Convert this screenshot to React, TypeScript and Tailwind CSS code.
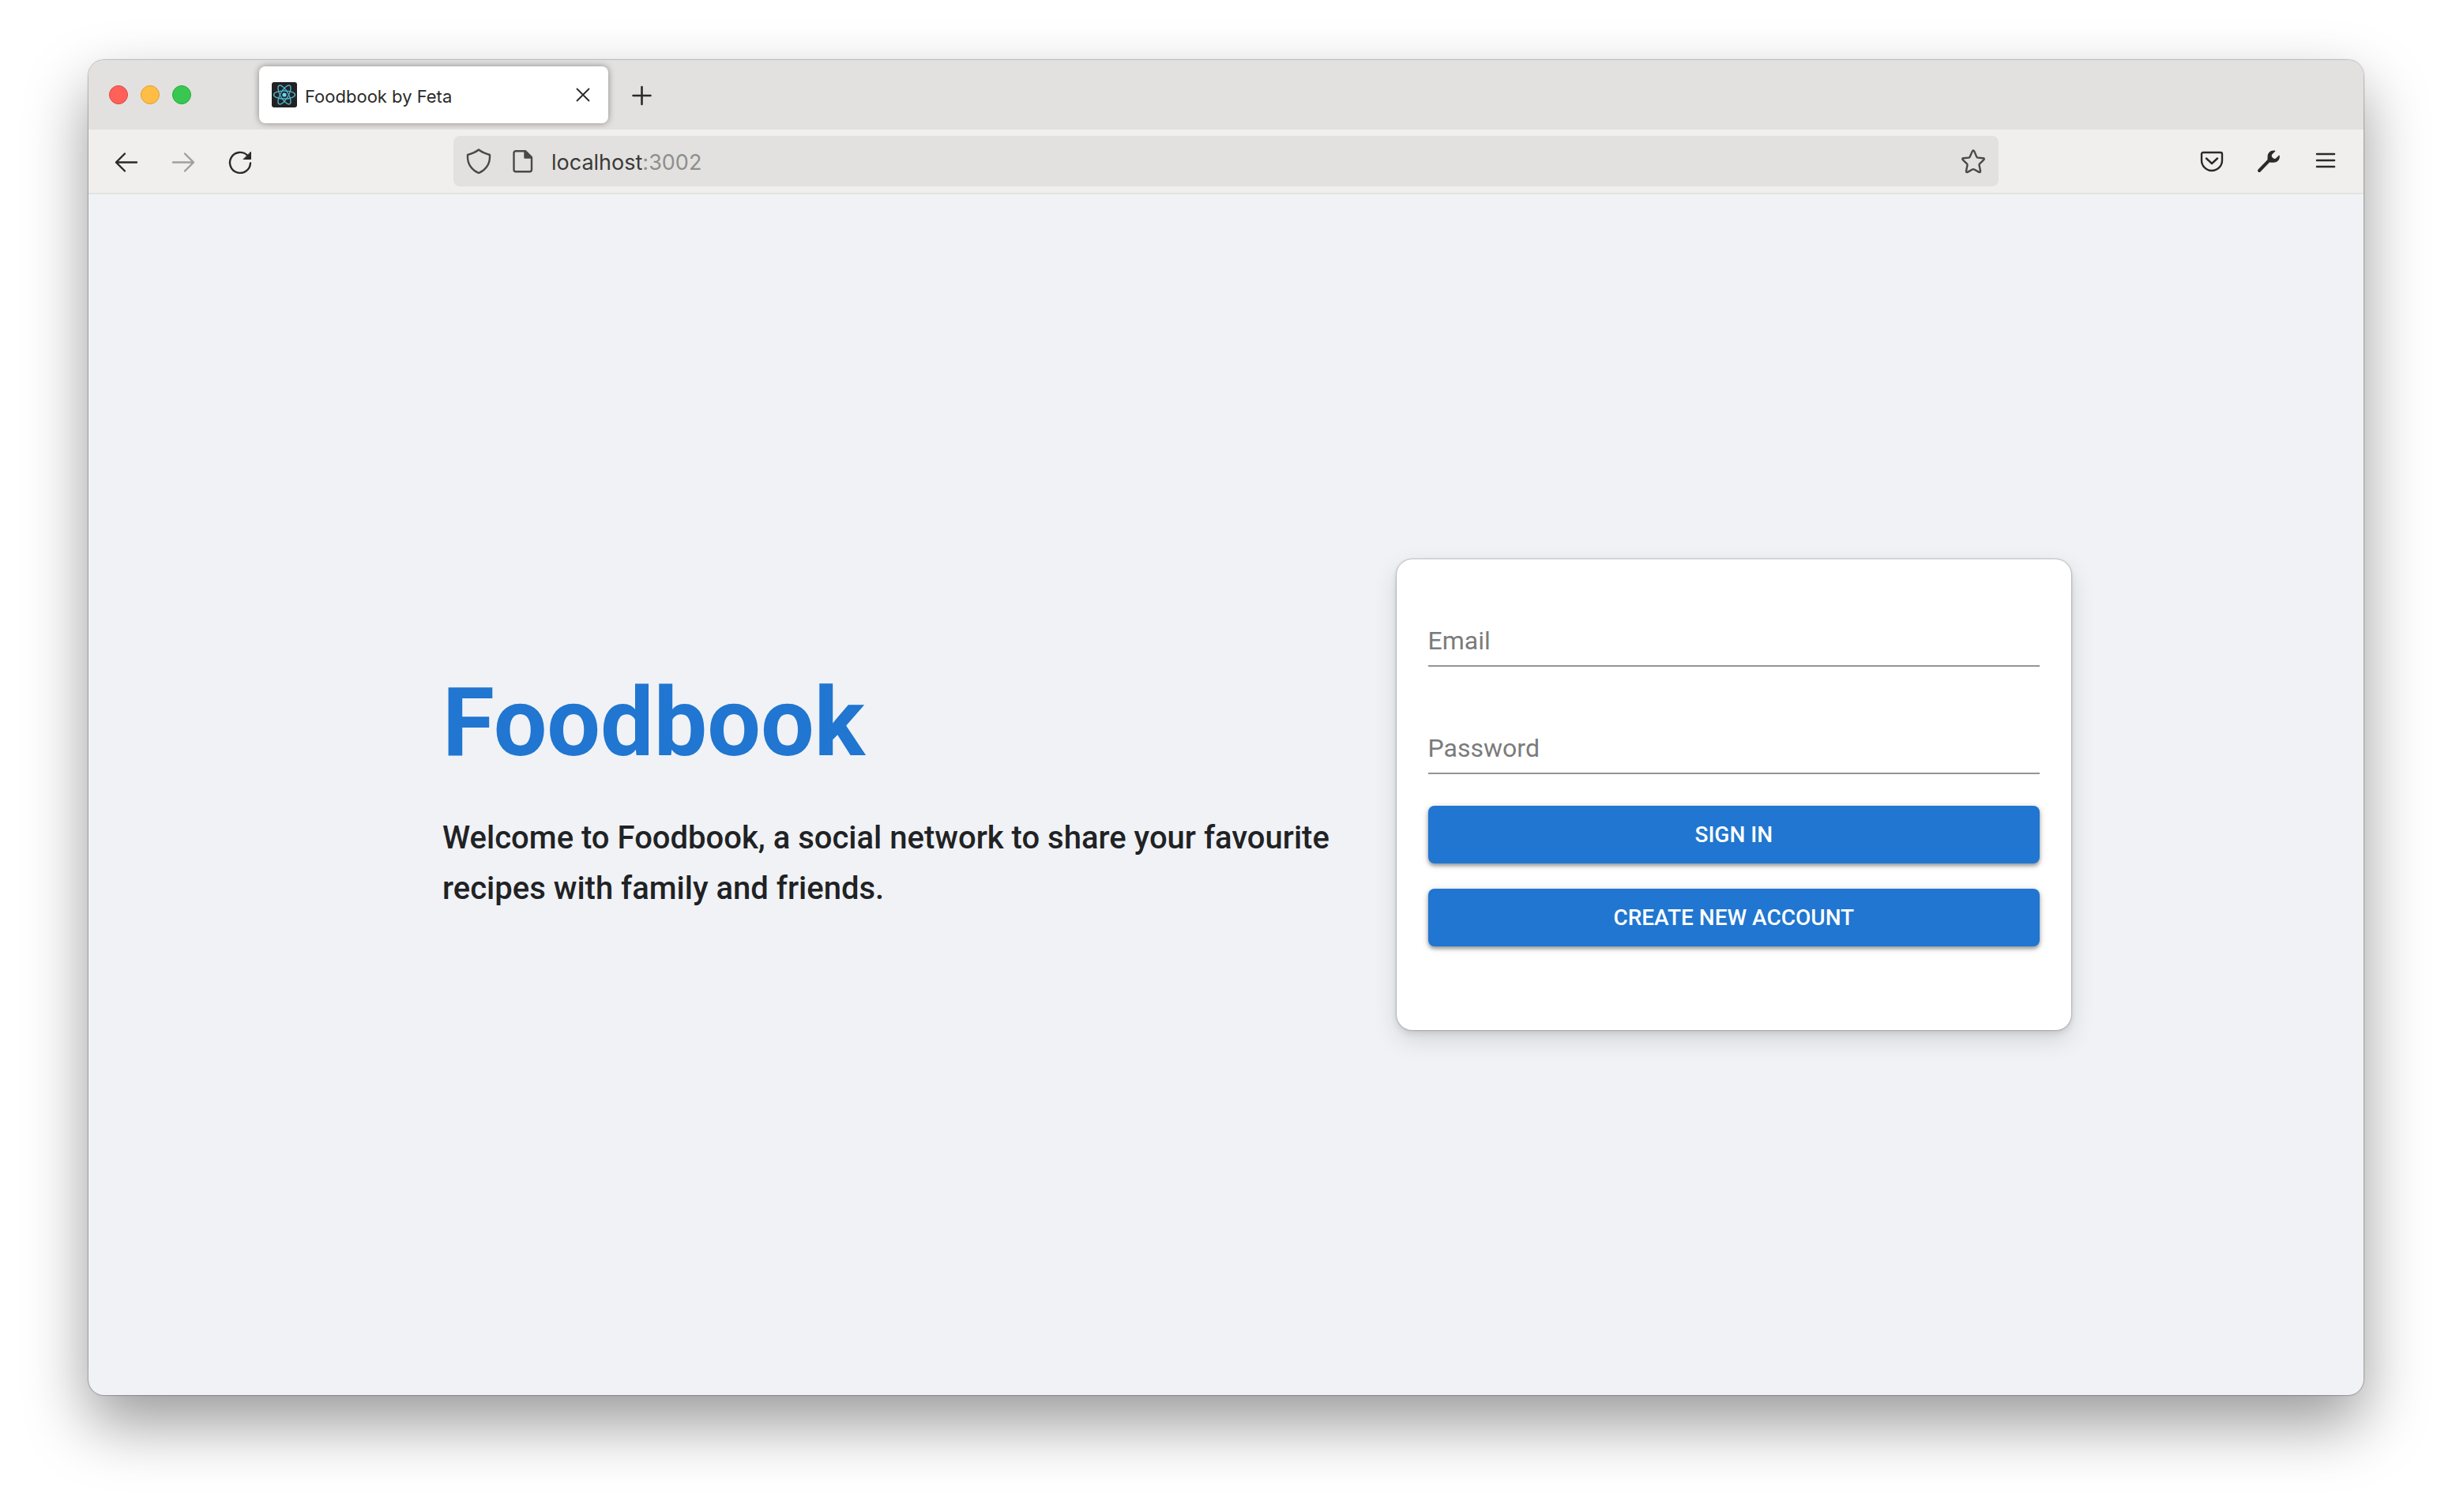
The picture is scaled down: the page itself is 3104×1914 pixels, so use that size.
import type { ReactNode } from "react";

function IconButton({ label, disabled, children }: { label: string; disabled?: boolean; children: ReactNode }) {
  return (
    <button
      type="button"
      aria-label={label}
      disabled={disabled}
      className="flex size-16 items-center justify-center rounded-lg text-[#2b2a28] disabled:opacity-40"
    >
      {children}
    </button>
  );
}

function Icon({ children }: { children: ReactNode }) {
  return (
    <svg
      viewBox="0 0 32 32"
      className="size-8 shrink-0"
      fill="none"
      stroke="currentColor"
      strokeWidth="2.4"
      strokeLinecap="round"
      strokeLinejoin="round"
      aria-hidden="true"
    >
      {children}
    </svg>
  );
}

function ReactFavicon() {
  return (
    <svg viewBox="0 0 32 32" className="size-8 shrink-0" aria-hidden="true">
      <rect width="32" height="32" rx="3" fill="#222222" />
      <g fill="none" stroke="#4fb3cf" strokeWidth="1.4">
        <ellipse cx="16" cy="16" rx="13.5" ry="5" />
        <ellipse cx="16" cy="16" rx="13.5" ry="5" transform="rotate(60 16 16)" />
        <ellipse cx="16" cy="16" rx="13.5" ry="5" transform="rotate(120 16 16)" />
      </g>
      <circle cx="16" cy="16" r="2.6" fill="#61dafb" />
    </svg>
  );
}

function TabStrip() {
  return (
    <header className="flex h-22 items-center bg-[#e2e1df] pl-[26px]">
      <div className="flex w-[190px] gap-4">
        <button type="button" aria-label="Close window" className="size-6 rounded-full border border-[#e2463f] bg-[#ff6159]" />
        <button type="button" aria-label="Minimize window" className="size-6 rounded-full border border-[#dfa033] bg-[#ffbd45]" />
        <button type="button" aria-label="Zoom window" className="size-6 rounded-full border border-[#27ab39] bg-[#38c851]" />
      </div>
      <div className="flex h-18 w-[442px] items-center gap-[10px] rounded-lg bg-white px-4 shadow-[0_0_8px_rgba(0,0,0,0.4)]">
        <ReactFavicon />
        <span className="flex-1 pt-1 font-[Inter] text-[22px] leading-8 text-[#2b2a28]">Foodbook by Feta</span>
        <button type="button" aria-label="Close tab" className="text-[#2b2a28]">
          <Icon>
            <path d="M8.500 8.500l15 15M23.500 8.500l-15 15" strokeWidth="1.800" />
          </Icon>
        </button>
      </div>
      <div className="ml-[10px]">
        <IconButton label="New tab">
          <Icon>
            <path d="M16.500 6v22M5.500 17h22" strokeWidth="2.600" />
          </Icon>
        </IconButton>
      </div>
    </header>
  );
}

function Toolbar() {
  return (
    <nav className="flex h-[82px] items-center border-b-2 border-[#e4e3e1] bg-[#f0efed] px-4" aria-label="Browser toolbar">
      <div className="flex gap-2">
        <IconButton label="Back">
          <Icon>
            <path d="M3 17.500h26M14 6.500L3 17.500l11 11" />
          </Icon>
        </IconButton>
        <IconButton label="Forward" disabled>
          <Icon>
            <path d="M3 17.500h26M18 6.500l11 11-11 11" />
          </Icon>
        </IconButton>
        <IconButton label="Reload">
          <Icon>
            <path d="M29 18.500A13 13 0 1 1 25 8.500" />
            <path d="M29.500 4.500v9H20.500z" fill="currentColor" strokeWidth="1" />
          </Icon>
        </IconButton>
      </div>
      <div className="w-[238px] shrink" />
      <div className="flex h-16 min-w-0 flex-1 items-center rounded-lg bg-[#e2e1df] px-4 text-[#4a4947]">
        <Icon>
          <path d="M16 1.500c4 3.200 8.500 5 14 6.500v3c0 9-5.500 16.500-14 20C7.500 27.500 2 20 2 11V8c5.500-1.500 10-3.300 14-6.500z" />
        </Icon>
        <div className="ml-6">
          <Icon>
            <path d="M7 3.200h12l8 8v15.500a2.500 2.500 0 0 1-2.500 2.500H7a2.500 2.500 0 0 1-2.500-2.500v-21A2.500 2.500 0 0 1 7 3.200z" />
            <path d="M18.500 3.500v8h8z" fill="currentColor" />
          </Icon>
        </div>
        <a href="#" className="ml-5 flex-1 pt-1 font-[Inter] text-[27px] leading-10 text-[#3a3937]">
          localhost<span className="text-[#8f8e8c]">:3002</span>
        </a>
        <button type="button" aria-label="Bookmark this page">
          <Icon>
            <path d="M14.700 3.600Q16 1.200 17.300 3.600L20.300 10.600Q20.700 11.500 21.700 11.600L28.600 12.300Q30.700 12.700 29.200 14.300L24 19.300Q23.300 20 23.500 21L25 28.500Q25.200 30.600 23.200 29.900L17.200 26.500Q16 25.900 14.800 26.500L8.800 29.900Q6.800 30.600 7 28.500L8.500 21Q8.700 20 8 19.300L2.800 14.300Q1.300 12.700 3.400 12.300L10.300 11.600Q11.300 11.500 11.700 10.600Z" />
          </Icon>
        </button>
      </div>
      <div className="w-[238px] shrink" />
      <div className="flex gap-2">
        <IconButton label="Save to Pocket">
          <Icon>
            <path d="M5 5h22a2 2 0 0 1 2 2v8a13 13 0 0 1-26 0V7a2 2 0 0 1 2-2z" />
            <path d="M9 12.500l7 6.500 7-6.500" />
          </Icon>
        </IconButton>
        <IconButton label="Developer tools">
          <Icon>
            <path d="M4 28L18 13.500" strokeWidth="4" />
            <path
              d="M23.500 2.500C18.500 1.800 14.300 5.500 14.600 10.200C14.700 12 14 13.200 14.800 14.500L17.500 17.400C18.800 18.200 20.500 17.600 22 17.700C27 17.800 30.300 13.800 29.800 9.200Q29.500 8 28.600 8.900L25.300 12.300Q23.500 13.600 21.600 12.200L20.200 10.800Q19 9 20.200 7.400L24 3.800Q25 2.800 23.500 2.500z"
              fill="currentColor"
              stroke="none"
            />
          </Icon>
        </IconButton>
        <IconButton label="Open menu">
          <Icon>
            <path d="M5 7h22M5 15h22M5 23h22" strokeWidth="2.600" />
          </Icon>
        </IconButton>
      </div>
    </nav>
  );
}

function Field({ id, label, type }: { id: string; label: string; type: string }) {
  return (
    <input
      id={id}
      type={type}
      aria-label={label}
      placeholder={label}
      className="h-16 w-full border-b-2 border-[#949494] bg-transparent text-[32px] leading-[46px] text-[#212121] outline-none placeholder:text-[#7b7b7b] placeholder:opacity-100"
    />
  );
}

function PrimaryButton({ type, children }: { type: "submit" | "button"; children: ReactNode }) {
  return (
    <button
      type={type}
      className="h-[73px] w-full rounded-lg bg-[#2076d0] text-[28px] font-medium text-white uppercase shadow-[0_3px_4px_rgba(0,0,0,0.3),0_2px_10px_rgba(0,0,0,0.2)]"
    >
      {children}
    </button>
  );
}

function LoginCard() {
  return (
    <form className="flex flex-col rounded-[20px] bg-white px-10 pt-18 pb-[106px] shadow-[0_0_0_1px_rgba(0,0,0,0.1),0_0_3px_rgba(0,0,0,0.2),0_4px_8px_rgba(0,0,0,0.1),0_12px_32px_rgba(0,0,0,0.12)]">
      <div className="flex flex-col gap-18">
        <Field id="email" label="Email" type="email" />
        <Field id="password" label="Password" type="password" />
      </div>
      <div className="mt-10 flex flex-col gap-8">
        <PrimaryButton type="submit">Sign in</PrimaryButton>
        <PrimaryButton type="button">Create new account</PrimaryButton>
      </div>
    </form>
  );
}

export default function App() {
  return (
    <div className="flex min-h-screen flex-col bg-white px-28 pt-[76px] pb-[148px] font-[Roboto,sans-serif]">
      <div className="flex flex-1 flex-col overflow-hidden rounded-[20px] bg-[#f0f2f6] shadow-[0_0_0_1px_rgba(0,0,0,0.15),0_0_3px_rgba(0,0,0,0.2),0_36px_80px_rgba(0,0,0,0.4)]">
        <TabStrip />
        <Toolbar />
        <main className="flex flex-1 items-center justify-center">
          <div className="grid w-full max-w-[2144px] grid-cols-[1207fr_854fr] items-center pr-0.5 pl-20">
            <section>
              <h1 className="text-[120px] leading-none font-bold text-[#2076d0]">Foodbook</h1>
              <p className="mt-[54px] text-[40px] leading-16 font-medium text-[#212224]">
                Welcome to Foodbook, a social network to share your favourite recipes with family and friends.
              </p>
            </section>
            <LoginCard />
          </div>
        </main>
      </div>
    </div>
  );
}
